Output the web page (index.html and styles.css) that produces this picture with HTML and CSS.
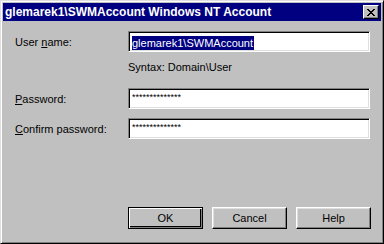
FILE: index.html
```html
<!DOCTYPE html>
<html lang="en">

<head>
    <meta charset="UTF-8">
    <title>glemarek1\SWMAccount Windows NT Account</title>
    <link rel="stylesheet" href="styles.css">
</head>

<body>
    <div class="window">
        <div class="titlebar">
            <span class="title">glemarek1\SWMAccount Windows NT Account</span>
            <span class="close">
                <svg width="8" height="7" viewBox="0 0 8 7">
                    <path d="M0 0h2v1h1v1h2v-1h1v-1h2v1h-1v1h-1v1h-1v1h1v1h1v1h1v1h-2v-1h-1v-1h-2v1h-1v1h-2v-1h1v-1h1v-1h1v-1h-1v-1h-1v-1h-1z" fill="#000" />
                </svg>
            </span>
        </div>

        <div class="content">
            <div class="row">
                <label class="label">User <u>n</u>ame:</label>
                <div class="field"><span class="selected">glemarek1\SWMAccount</span></div>
            </div>
            <div class="hint">Syntax: Domain\User</div>

            <div class="row pw-first">
                <label class="label"><u>P</u>assword:</label>
                <div class="field stars">**************</div>
            </div>
            <div class="row pw-second">
                <label class="label"><u>C</u>onfirm password:</label>
                <div class="field stars">**************</div>
            </div>

            <div class="buttons">
                <button class="btn default">OK</button>
                <button class="btn">Cancel</button>
                <button class="btn">Help</button>
            </div>
        </div>
    </div>
</body>

</html>
```

FILE: styles.css
```css
body {
    margin: 0;
    font-family: "Liberation Sans", Arial, sans-serif;
    font-size: 11px;
    color: #000;
    background: #c0c0c0;
}

.window {
    width: 384px;
    height: 244px;
    box-sizing: border-box;
    background: #c0c0c0;
    border: 1px solid;
    border-color: #dfdfdf #000 #000 #dfdfdf;
    box-shadow: inset 1px 1px #fff, inset -1px -1px #808080;
    padding: 2px;
    display: flex;
    flex-direction: column;
}

.titlebar {
    height: 18px;
    background: #000080;
    color: #fff;
    display: flex;
    align-items: center;
    justify-content: space-between;
    padding: 0 2px 0 2px;
}

.title {
    font-weight: bold;
    font-size: 12px;
}

.close {
    width: 16px;
    height: 14px;
    box-sizing: border-box;
    background: #c0c0c0;
    border: 1px solid;
    border-color: #fff #000 #000 #fff;
    box-shadow: inset -1px -1px #808080;
    display: flex;
    align-items: center;
    justify-content: center;
    padding-right: 1px;
}

.content {
    flex: 1;
    display: flex;
    flex-direction: column;
    padding: 10px 10px 0 12px;
}

.row {
    display: flex;
    align-items: center;
}

.label {
    width: 113px;
}

.field {
    width: 242px;
    height: 21px;
    box-sizing: border-box;
    background: #fff;
    border: 1px solid;
    border-color: #808080 #fff #fff #808080;
    box-shadow: inset 1px 1px #000, inset -1px -1px #dfdfdf;
    padding: 2px 2px 0 3px;
    display: flex;
    align-items: center;
    white-space: nowrap;
}

.selected {
    background: #000080;
    color: #fff;
    font-size: 11px;
    line-height: 14px;
    padding-right: 1px;
}

.stars {
    font-size: 9px;
    align-items: flex-start;
    padding-top: 3px;
}

.hint {
    margin: 9px 0 0 113px;
    height: 13px;
}

.pw-first {
    margin-top: 14px;
}

.pw-second {
    margin-top: 9px;
}

.buttons {
    margin-top: auto;
    margin-bottom: 12px;
    padding-left: 113px;
    display: flex;
    gap: 9px;
}

.btn {
    width: 75px;
    height: 22px;
    box-sizing: border-box;
    font: inherit;
    background: #c0c0c0;
    border: 1px solid;
    border-color: #fff #000 #000 #fff;
    box-shadow: inset -1px -1px #808080, inset 1px 1px #dfdfdf;
    padding: 0;
}

.default {
    border: 1px solid #000;
    box-shadow: inset 1px 1px #fff, inset -1px -1px #808080, inset -2px -2px #000;
}
```
